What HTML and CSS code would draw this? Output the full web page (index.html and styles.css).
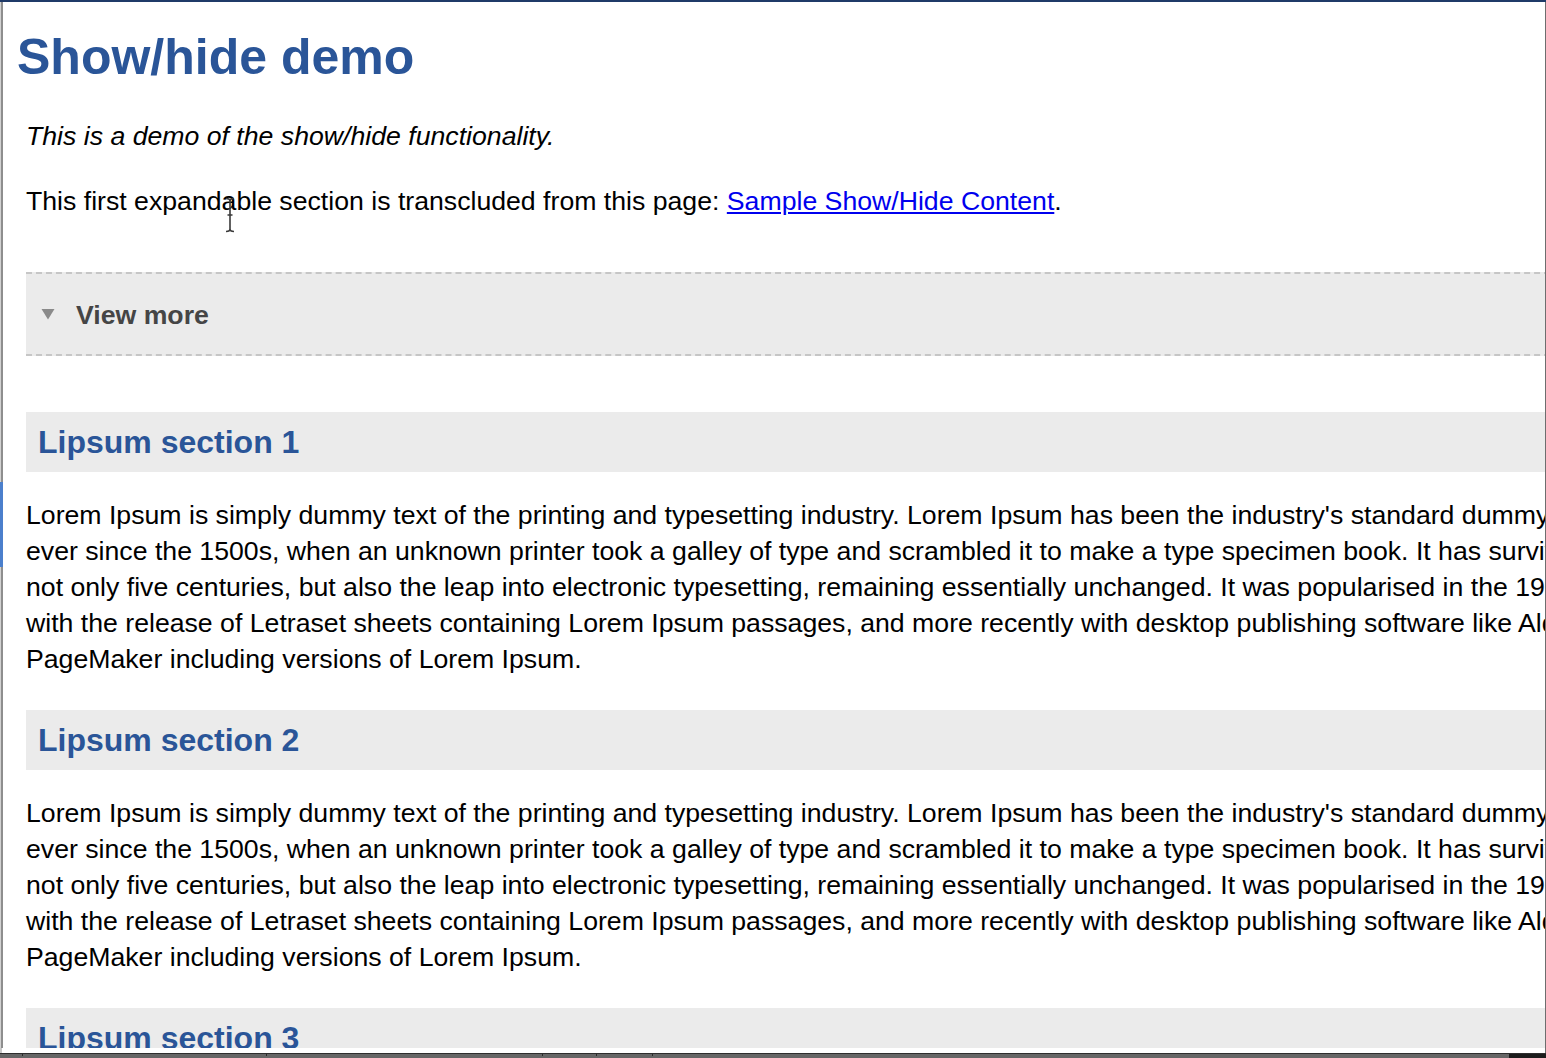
FILE: index.html
```html
<!DOCTYPE html>
<html lang="en">
<head>
<meta charset="utf-8">
<title>Show/hide demo</title>
<link rel="stylesheet" href="styles.css">
</head>
<body>
<div class="window">
  <div class="frame">
    <div class="gutter">
      <div class="gutter-top"></div>
      <div class="gutter-mark"></div>
    </div>
    <div class="viewport">
      <div class="page">
        <h1 class="page-title">Show/hide demo</h1>
        <div class="content">
          <p class="intro"><em>This is a demo of the show/hide functionality.</em></p>
          <p class="lead">This first expandable section is transcluded from this page: <a class="link" href="#">Sample Show/Hide Content</a>.</p>
          <div class="expander">
            <svg class="expander-icon" width="14" height="12" viewBox="0 0 14 12"><polygon points="0.5,1 13.5,1 7,11.5" fill="#8a8a8a"/></svg>
            <span class="expander-label">View more</span>
          </div>
          <h2 class="section-title first">Lipsum section 1</h2>
          <p class="body-text">Lorem Ipsum is simply dummy text of the printing and typesetting industry. Lorem Ipsum has been the industry's standard dummy text ever since the 1500s, when an unknown printer took a galley of type and scrambled it to make a type specimen book. It has survived not only five centuries, but also the leap into electronic typesetting, remaining essentially unchanged. It was popularised in the 1960s with the release of Letraset sheets containing Lorem Ipsum passages, and more recently with desktop publishing software like Aldus PageMaker including versions of Lorem Ipsum.</p>
          <h2 class="section-title">Lipsum section 2</h2>
          <p class="body-text">Lorem Ipsum is simply dummy text of the printing and typesetting industry. Lorem Ipsum has been the industry's standard dummy text ever since the 1500s, when an unknown printer took a galley of type and scrambled it to make a type specimen book. It has survived not only five centuries, but also the leap into electronic typesetting, remaining essentially unchanged. It was popularised in the 1960s with the release of Letraset sheets containing Lorem Ipsum passages, and more recently with desktop publishing software like Aldus PageMaker including versions of Lorem Ipsum.</p>
          <h2 class="section-title">Lipsum section 3</h2>
          <p class="body-text">Lorem Ipsum is simply dummy text of the printing and typesetting industry.</p>
        </div>
      </div>
      <svg class="cursor" width="12" height="36" viewBox="0 0 12 36">
        <path d="M2 1.5 Q6 1.5 6 4 Q6 1.5 10 1.5 M6 4 V32 Q6 34.5 2 34.5 M6 32 Q6 34.5 10 34.5 M3.5 18 H8.5" fill="none" stroke="#3a3a3a" stroke-width="1.6"/>
      </svg>
    </div>
  </div>
  <div class="bottom-gap"></div>
  <div class="statusbar">
    <div class="status-track">
      <span class="tick"></span><span class="tick"></span><span class="tick"></span><span class="tick"></span><span class="tick"></span>
    </div>
    <div class="status-end"></div>
  </div>
</div>
</body>
</html>
```

FILE: styles.css
```css
html, body {
  margin: 0;
  padding: 0;
}

body {
  width: 1546px;
  height: 1058px;
  overflow: hidden;
  background: #fff;
  font-family: "Liberation Sans", Arial, Helvetica, sans-serif;
  color: #000;
}

.window {
  height: 1058px;
  display: flex;
  flex-direction: column;
  border-top: 2px solid #1f3a68;
  box-sizing: border-box;
}

.frame {
  flex: 1;
  display: flex;
  min-height: 0;
}

.gutter {
  width: 3px;
  flex: none;
  display: flex;
  flex-direction: column;
  background: linear-gradient(to right, #d2d2d2 0 1px, #8e8e8e 1px 3px);
}

.gutter-top {
  height: 480px;
}

.gutter-mark {
  height: 85px;
  background: #4b7fcc;
}

.viewport {
  flex: 1;
  position: relative;
  overflow: hidden;
  border-right: 1px solid #6e6e6e;
}

.page {
  width: 1603px;
  padding: 25px 0 0 14px;
}

.page-title {
  margin: 0;
  font-size: 50px;
  line-height: 60px;
  font-weight: bold;
  color: #2a5598;
}

.content {
  margin-left: 9px;
  padding-top: 31px;
  font-size: 26.67px;
  line-height: 36px;
}

.content p {
  margin: 0;
}

.intro {
  margin-bottom: 29px !important;
}

.lead {
  margin-bottom: 53px !important;
}

.link {
  color: #0000ee;
  text-decoration: underline;
}

.expander {
  height: 78px;
  display: flex;
  align-items: center;
  gap: 21px;
  padding-left: 15px;
  padding-top: 2px;
  box-sizing: content-box;
  background: #ebebeb;
  border-top: 2px dashed #c6c6c6;
  border-bottom: 2px dashed #c6c6c6;
}

.expander-icon {
  flex: none;
  margin-top: -2px;
}

.expander-label {
  font-weight: bold;
  color: #454545;
}

.section-title {
  margin: 33px 0 0;
  height: 60px;
  padding-left: 12px;
  display: flex;
  align-items: center;
  background: #ebebeb;
  font-size: 32px;
  line-height: 36px;
  font-weight: bold;
  color: #2a5598;
}

.section-title.first {
  margin-top: 56px;
}

.content .body-text {
  margin-top: 25px;
}

.cursor {
  position: absolute;
  left: 221px;
  top: 195px;
}

.bottom-gap {
  height: 5px;
  flex: none;
  border-left: 2px solid #c8c8c8;
  border-right: 1px solid #6e6e6e;
}

.statusbar {
  height: 5px;
  flex: none;
  display: flex;
  border-top: 1px solid #2e2e2e;
  box-sizing: border-box;
}

.status-track {
  flex: 1;
  display: flex;
  background: #666;
}

.tick {
  width: 1px;
  height: 2px;
  background: #2a2a2a;
}

.tick:nth-child(1) { margin-left: 22px; }
.tick:nth-child(2) { margin-left: 243px; }
.tick:nth-child(3) { margin-left: 275px; }
.tick:nth-child(4) { margin-left: 53px; }
.tick:nth-child(5) { margin-left: 55px; }

.status-end {
  width: 37px;
  background: #1c1c1c;
}
```
